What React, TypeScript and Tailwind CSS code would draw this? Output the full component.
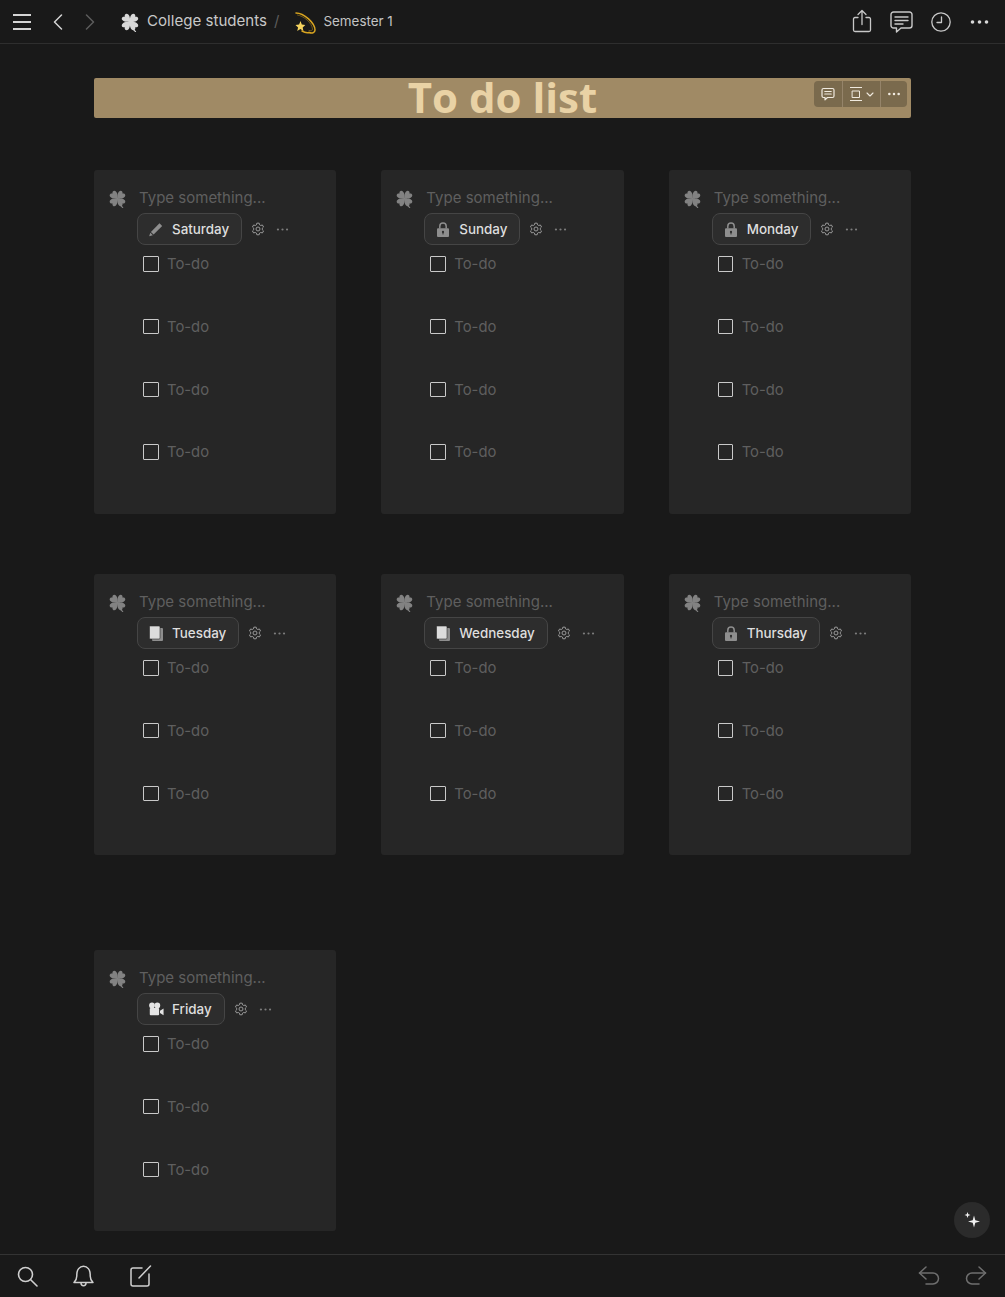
import React from "react";

const LEAF = "M0 1C-.5-1-4.100-3-4.100-6.400C-4.100-8.900-1.400-9.700 0-7.400C1.400-9.700 4.100-8.900 4.100-6.400C4.100-3 .5-1 0 1Z";

const Clover = ({ className = "", fill = "#8a8a8a" }: { className?: string; fill?: string }) => (
  <svg viewBox="0 0 20 20" className={className} fill={fill}>
    <g transform="translate(10 10)">
      <path d={LEAF} transform="rotate(-45)" />
      <path d={LEAF} transform="rotate(45)" />
      <path d={LEAF} transform="rotate(-135)" />
      <path d={LEAF} transform="rotate(135)" />
    </g>
    <path d="M10 10C11 13.500 12.500 17 15.500 19.600" fill="none" stroke={fill} strokeWidth="1.200" strokeLinecap="round" />
  </svg>
);

const Dots = ({ className = "", r = 1.6 }: { className?: string; r?: number }) => (
  <svg viewBox="0 0 20 6" className={className} fill="currentColor">
    <circle cx="3" cy="3" r={r} />
    <circle cx="10" cy="3" r={r} />
    <circle cx="17" cy="3" r={r} />
  </svg>
);

const Gear = () => (
  <svg viewBox="0 0 24 24" className="w-[14px] h-[14px] text-[#9a9a9a]" fill="none" stroke="currentColor" strokeWidth="1.700" strokeLinejoin="round">
    <path d="M10 2h4l.7 2.900 2 1.100 2.800-.9 2 3.400-2.100 2v2.900l2.100 2-2 3.400-2.800-.9-2 1.100-.7 2.900h-4l-.7-2.900-2-1.100-2.800.9-2-3.400 2.100-2v-2.900l-2.100-2 2-3.400 2.800.9 2-1.100z" />
    <circle cx="12" cy="12" r="3.400" />
  </svg>
);

const Pencil = () => (
  <svg viewBox="0 0 16 16" className="w-[17px] h-[17px]" fill="#8e8e8e">
    <path d="M11.500 1.800 14.200 4.500 5.600 13.100 2.900 10.400Z" />
    <path d="M2.300 11.200 4.800 13.700 1.200 14.800Z" />
  </svg>
);

const Lock = () => (
  <svg viewBox="0 0 16 16" className="w-[17px] h-[17px]">
    <path d="M4.800 7V4.800a3.200 3.200 0 0 1 6.400 0V7" fill="none" stroke="#8e8e8e" strokeWidth="1.500" />
    <rect x="2" y="6.800" width="12" height="8.700" rx="1" fill="#8e8e8e" />
    <circle cx="8" cy="10.400" r="1.100" fill="#2b2b2b" />
    <rect x="7.500" y="10.600" width="1" height="2.300" fill="#2b2b2b" />
  </svg>
);

const Pages = () => (
  <svg viewBox="0 0 16 16" className="w-[17px] h-[17px]">
    <path d="M5 2.500h9a1 1 0 0 1 1 1V14.500a1 1 0 0 1-1 1H5a1 1 0 0 1-1-1Z" fill="#8e8e8e" />
    <path d="M1.500.5h9.500a1 1 0 0 1 1 1v11a1 1 0 0 1-1 1H2.500a1 1 0 0 1-1-1Z" fill="#dcdcdc" stroke="#2b2b2b" strokeWidth=".6" />
  </svg>
);

const Camera = () => (
  <svg viewBox="0 0 18 16" className="w-[18px] h-[16px]" fill="#e4e4e4">
    <circle cx="4.500" cy="4" r="3.200" />
    <circle cx="10.500" cy="4" r="3.200" />
    <rect x="2" y="7" width="10.500" height="8" rx="1" />
    <path d="M13.500 10 17.500 7.500V15L13.500 12.500Z" />
  </svg>
);

const icons = { pencil: <Pencil />, lock: <Lock />, pages: <Pages />, camera: <Camera /> };

type Day = { name: string; icon: keyof typeof icons; rows: number };

const Card = ({ day }: { day: Day }) => (
  <div className={`rounded-[3px] bg-[#262626] pl-[14px] pt-[19px] ${day.rows === 4 ? "h-[344px]" : "h-[281px]"}`}>
    <div className="flex items-center h-[19px]">
      <Clover className="w-[19px] h-[19px] shrink-0" fill="#828282" />
      <span className="ml-[12px] text-[15px] text-[#5f5f5f]">Type something...</span>
    </div>
    <div className="flex items-center ml-[29px] mt-[5px]">
      <div className="flex items-center h-[32px] rounded-lg border border-[#454545] bg-[#2d2d2d] pl-[10px] pr-[12px]">
        <span className="w-[16px] flex justify-center">{icons[day.icon]}</span>
        <span className="ml-[8px] text-[13.400px] font-medium text-[#dedede]">{day.name}</span>
      </div>
      <span className="ml-[9px]"><Gear /></span>
      <Dots className="ml-[11px] w-[13px] h-[5px] text-[#7d7d7d]" r={1.700} />
    </div>
    <div className="ml-[35px] mt-[1.300px]">
      {Array.from({ length: day.rows }).map((_, i) => (
        <div key={i} className="flex items-start h-[62.700px] pt-[8px]">
          <span className="mt-[2px] w-[15.500px] h-[15.500px] border-[1.800px] border-[#c9c9c9] rounded-[1px] shrink-0" />
          <span className="ml-[8.500px] text-[14.800px] leading-[20px] text-[#5f5f5f]">To-do</span>
        </div>
      ))}
    </div>
  </div>
);

const line = { fill: "none", stroke: "currentColor", strokeLinecap: "round", strokeLinejoin: "round" } as const;

const days: Day[] = [
  { name: "Saturday", icon: "pencil", rows: 4 },
  { name: "Sunday", icon: "lock", rows: 4 },
  { name: "Monday", icon: "lock", rows: 4 },
  { name: "Tuesday", icon: "pages", rows: 3 },
  { name: "Wednesday", icon: "pages", rows: 3 },
  { name: "Thursday", icon: "lock", rows: 3 },
  { name: "Friday", icon: "camera", rows: 3 },
];

export default function App() {
  return (
    <div className="relative flex flex-col h-[1297px] overflow-hidden bg-[#191919] font-['Inter','Liberation_Sans',sans-serif]">
      <header className="flex items-center h-[44px] shrink-0 border-b border-[#2e2e2e] pl-[13px] pr-[15px] text-[#d4d4d4]">
        <svg viewBox="0 0 18 16" className="w-[18px] h-[16px]" {...line} strokeWidth="1.800" strokeLinecap="butt">
          <path d="M0 1h18M0 8h18M0 15h18" />
        </svg>
        <svg viewBox="0 0 10 16" className="ml-[22px] w-[10px] h-[16px]" {...line} strokeWidth="1.500">
          <path d="M8.500 1 1.500 8l7 7" />
        </svg>
        <svg viewBox="0 0 10 16" className="ml-[22px] w-[10px] h-[16px] text-[#5c5c5c]" {...line} strokeWidth="1.500">
          <path d="M1.500 1l7 7-7 7" />
        </svg>
        <Clover className="ml-[25px] w-[20px] h-[20px]" fill="#d8d8d8" />
        <span className="ml-[7px] text-[15.100px] text-[#c8c8c8]">College students</span>
        <span className="ml-[7px] text-[15px] text-[#5c5c5c]">/</span>
        <svg viewBox="0 0 22 22" className="ml-[15px] w-[22px] h-[22px] translate-y-[1px]">
          <path d="M2 1C10 1 21 11 21 18c0 3-3 3.500-6 2.500" fill="none" stroke="#d9a520" strokeWidth="1.500" strokeLinecap="round" />
          <path d="M3.500 3C10 4 18 11 18.500 17c0 1.800-1.500 2-3.500 1.500" fill="none" stroke="#7a5f16" strokeWidth=".9" strokeLinecap="round" />
          <path d="M8 19C10.500 20.500 13 21 15 20.500" fill="none" stroke="#d9a520" strokeWidth="1.500" strokeLinecap="round" />
          <path d="M6.500 9 7.800 12.500l3.500.6-2.600 2.300.7 3.600-3-1.900-3.200 1.800.9-3.500-2.600-2.400 3.600-.4Z" fill="#f4d35e" />
        </svg>
        <span className="ml-[7px] text-[13.400px] text-[#c4c4c4]">Semester 1</span>
        <div className="ml-auto flex items-center">
          <svg viewBox="0 0 20 24" className="w-[20px] h-[24px] text-[#c8c8c8] -translate-y-[1px]" {...line} strokeWidth="1.300">
            <path d="M6 8.500H3a1.500 1.500 0 0 0-1.500 1.500v11A1.500 1.500 0 0 0 3 22.500h14a1.500 1.500 0 0 0 1.500-1.500V10A1.500 1.500 0 0 0 17 8.500h-3" />
            <path d="M10 15.500V1.500M6 5.500l4-4 4 4" />
          </svg>
          <svg viewBox="0 0 23 22" className="ml-[18px] w-[23px] h-[22px] text-[#c8c8c8]" {...line} strokeWidth="1.400">
            <path d="M3.500 1h16A2.500 2.500 0 0 1 22 3.500v11a2.500 2.500 0 0 1-2.500 2.500H11l-4.500 4v-4h-3A2.500 2.500 0 0 1 1 14.500v-11A2.500 2.500 0 0 1 3.500 1Z" />
            <path d="M5 6h13M5 9.500h13M5 13h8" />
          </svg>
          <svg viewBox="0 0 20 20" className="ml-[18px] w-[20px] h-[20px] text-[#c8c8c8]" {...line} strokeWidth="1.300">
            <circle cx="10" cy="10" r="9.200" />
            <path d="M10.500 5v5.500H6" />
          </svg>
          <Dots className="ml-[18px] w-[21px] h-[6px] text-[#d8d8d8]" r={1.800} />
        </div>
      </header>

      <main className="flex-1 min-h-0 px-[94px] pt-[34px]">
        <div className="relative h-[40px] rounded-[2px] bg-[#a08a65] flex items-center justify-center">
          <h1 className="text-[42px] leading-[40px] font-bold text-[#e9d2a5] font-['Open_Sans',sans-serif] translate-y-[-1px]">To do list</h1>
          <div className="absolute right-[4px] top-[3px] flex h-[26px] rounded-[4px] bg-[#7a6a4d] text-[#f0eadf] divide-x divide-[#95846a]">
            <div className="w-[29px] flex items-center justify-center">
              <svg viewBox="0 0 14 14" className="w-[14px] h-[14px]" {...line} strokeWidth="1.200">
                <path d="M2.500 1.500h9a1.500 1.500 0 0 1 1.500 1.500v6a1.500 1.500 0 0 1-1.500 1.500H6.500l-2.500 2.300v-2.300H2.500A1.500 1.500 0 0 1 1 9V3a1.500 1.500 0 0 1 1.500-1.500Z" />
                <path d="M3.800 4.500h6.400M3.800 7h6.400" />
              </svg>
            </div>
            <div className="w-[38px] flex items-center justify-center gap-[4px]">
              <svg viewBox="0 0 12 14" className="w-[12px] h-[14px]" {...line} strokeWidth="1">
                <path d="M0 .5h12M0 13.500h12" strokeLinecap="butt" />
                <rect x="2.500" y="4" width="7" height="6.500" />
              </svg>
              <svg viewBox="0 0 8 5" className="w-[8px] h-[5px]" {...line} strokeWidth="1.100">
                <path d="M1 1l3 3 3-3" />
              </svg>
            </div>
            <div className="flex-1 w-[26px] flex items-center justify-center">
              <Dots className="w-[14px] h-[4px]" r={1.900} />
            </div>
          </div>
        </div>

        <div className="grid grid-cols-3 gap-x-[45px] mt-[52px]">
          <div className="col-span-3 grid grid-cols-3 gap-x-[45px]">
            {days.slice(0, 3).map((d) => <Card key={d.name} day={d} />)}
          </div>
          <div className="col-span-3 grid grid-cols-3 gap-x-[45px] mt-[60px]">
            {days.slice(3, 6).map((d) => <Card key={d.name} day={d} />)}
          </div>
          <div className="col-span-3 grid grid-cols-3 gap-x-[45px] mt-[95px]">
            <Card day={days[6]} />
          </div>
        </div>
      </main>

      <div className="absolute left-[954px] top-[1202px] w-[36px] h-[36px] rounded-full bg-[#2b2b2b] flex items-center justify-center">
        <svg viewBox="0 0 18 18" className="w-[18px] h-[18px]" fill="#f0f0f0">
          <path d="M11 4.500 12.300 9.200 17 10.500 12.300 11.800 11 16.500 9.700 11.800 5 10.500 9.700 9.200Z" />
          <path d="M4.500 1 5.300 3.200 7.500 4 5.300 4.800 4.500 7 3.700 4.800 1.500 4 3.700 3.200Z" />
        </svg>
      </div>

      <footer className="flex items-center h-[43px] shrink-0 border-t border-[#333333] pl-[17px] pr-[18px] text-[#cfcfcf]">
        <svg viewBox="0 0 21 21" className="w-[21px] h-[21px]" {...line} strokeWidth="1.600">
          <circle cx="8.500" cy="8.500" r="7" />
          <path d="M13.700 13.700 20 20" />
        </svg>
        <svg viewBox="0 0 21 22" className="ml-[35px] w-[21px] h-[22px]" {...line} strokeWidth="1.500">
          <path d="M1 17.500h19c-1.500-1.500-2.800-3-2.800-6.500V9.500C17.200 5 14.500 1.200 10.500 1.200S3.800 5 3.800 9.500V11c0 3.500-1.300 5-2.800 6.500Z" />
          <path d="M8 18c0 3.500 5 3.500 5 0" />
        </svg>
        <svg viewBox="0 0 22 22" className="ml-[36px] w-[22px] h-[22px]" {...line} strokeWidth="1.500">
          <path d="M12 3H3a2 2 0 0 0-2 2v14a2 2 0 0 0 2 2h14a2 2 0 0 0 2-2V9" />
          <path d="M9 13 20.500 1" />
        </svg>
        <div className="ml-auto flex items-center text-[#6f6f6f]">
          <svg viewBox="0 0 22 20" className="w-[22px] h-[20px]" {...line} strokeWidth="1.500">
            <path d="M8 1 1.500 7 8 13" />
            <path d="M1.500 7H15a5.500 5.500 0 0 1 0 11H8" />
          </svg>
          <svg viewBox="0 0 22 20" className="ml-[25px] w-[22px] h-[20px]" {...line} strokeWidth="1.500">
            <path d="M14 1l6.500 6L14 13" />
            <path d="M20.500 7H7a5.500 5.500 0 0 0 0 11h7" />
          </svg>
        </div>
      </footer>
    </div>
  );
}
